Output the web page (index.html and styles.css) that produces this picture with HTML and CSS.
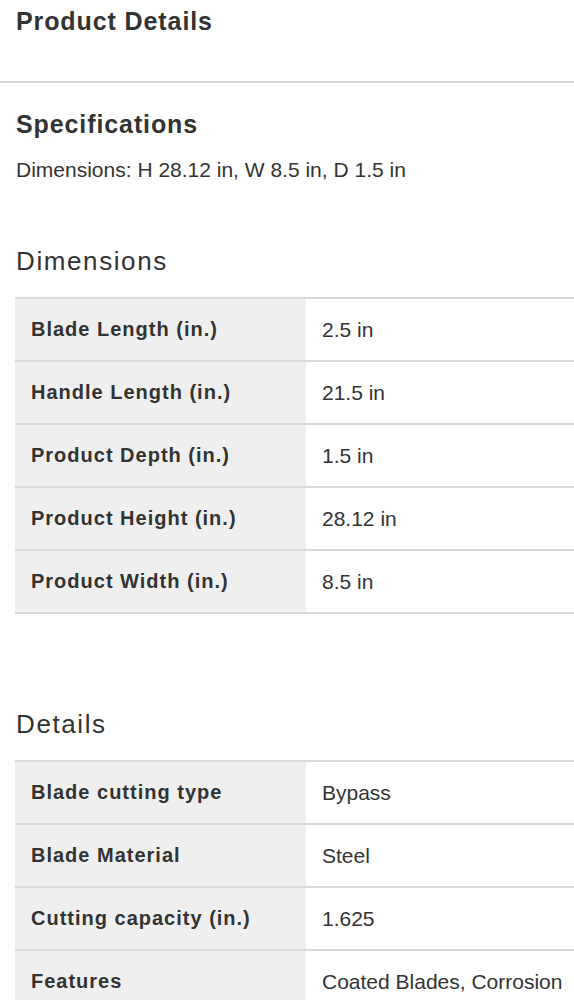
FILE: index.html
```html
<!DOCTYPE html>
<html lang="en">
  <head>
    <meta charset="UTF-8" />
    <meta name="viewport" content="width=device-width, initial-scale=1.0" />
    <title>Product Details</title>
    <link rel="stylesheet" href="styles.css">
  </head>
  <body>
    <header class="page-header">
      <h1>Product Details</h1>
    </header>

    <section class="overview">
      <h2>Specifications</h2>
      <p>Dimensions: H 28.12 in, W 8.5 in, D 1.5 in</p>
    </section>

    <section class="spec-group">
      <h3>Dimensions</h3>
      <dl class="spec-list">
        <div class="spec-row">
          <dt>Blade Length (in.)</dt>
          <dd>2.5 in</dd>
        </div>
        <div class="spec-row">
          <dt>Handle Length (in.)</dt>
          <dd>21.5 in</dd>
        </div>
        <div class="spec-row">
          <dt>Product Depth (in.)</dt>
          <dd>1.5 in</dd>
        </div>
        <div class="spec-row">
          <dt>Product Height (in.)</dt>
          <dd>28.12 in</dd>
        </div>
        <div class="spec-row">
          <dt>Product Width (in.)</dt>
          <dd>8.5 in</dd>
        </div>
      </dl>
    </section>

    <section class="spec-group details">
      <h3>Details</h3>
      <dl class="spec-list">
        <div class="spec-row">
          <dt>Blade cutting type</dt>
          <dd>Bypass</dd>
        </div>
        <div class="spec-row">
          <dt>Blade Material</dt>
          <dd>Steel</dd>
        </div>
        <div class="spec-row">
          <dt>Cutting capacity (in.)</dt>
          <dd>1.625</dd>
        </div>
        <div class="spec-row">
          <dt>Features</dt>
          <dd>Coated Blades, Corrosion</dd>
        </div>
      </dl>
    </section>
  </body>
</html>
```

FILE: styles.css
```css
* {
  box-sizing: border-box;
  margin: 0;
  padding: 0;
  font-family: "Liberation Sans", Arial, Helvetica, sans-serif;
}

body {
  background-color: #fff;
  color: #333;
  overflow-x: hidden;
}

h1,
h2 {
  font-size: 25px;
  font-weight: 700;
  line-height: 30px;
  letter-spacing: 0.9px;
}

h3 {
  font-size: 26px;
  font-weight: 400;
  line-height: 30px;
  letter-spacing: 1.6px;
}

.page-header {
  padding: 6px 16px 45px;
  border-bottom: 2px solid #d6d6d6;
}

.overview {
  padding: 26px 16px 0;
}

.overview p {
  margin-top: 17px;
  font-size: 21px;
  line-height: 28px;
}

.spec-group {
  margin-top: 62px;
}

.spec-group.details {
  margin-top: 95px;
}

.spec-group h3 {
  padding-left: 16px;
  margin-bottom: 21px;
}

.spec-list {
  margin-left: 15px;
  border-bottom: 2px solid #d9d9d9;
}

.spec-row {
  display: grid;
  grid-template-columns: 291px 1fr;
  border-top: 2px solid #d9d9d9;
}

.spec-row dt,
.spec-row dd {
  display: flex;
  align-items: center;
  min-height: 61px;
  padding: 0 16px;
}

.spec-row dt {
  background-color: #efefef;
  font-size: 20px;
  font-weight: 700;
  letter-spacing: 1px;
}

.spec-row dd {
  font-size: 21px;
  padding-right: 0;
  white-space: nowrap;
}
```
